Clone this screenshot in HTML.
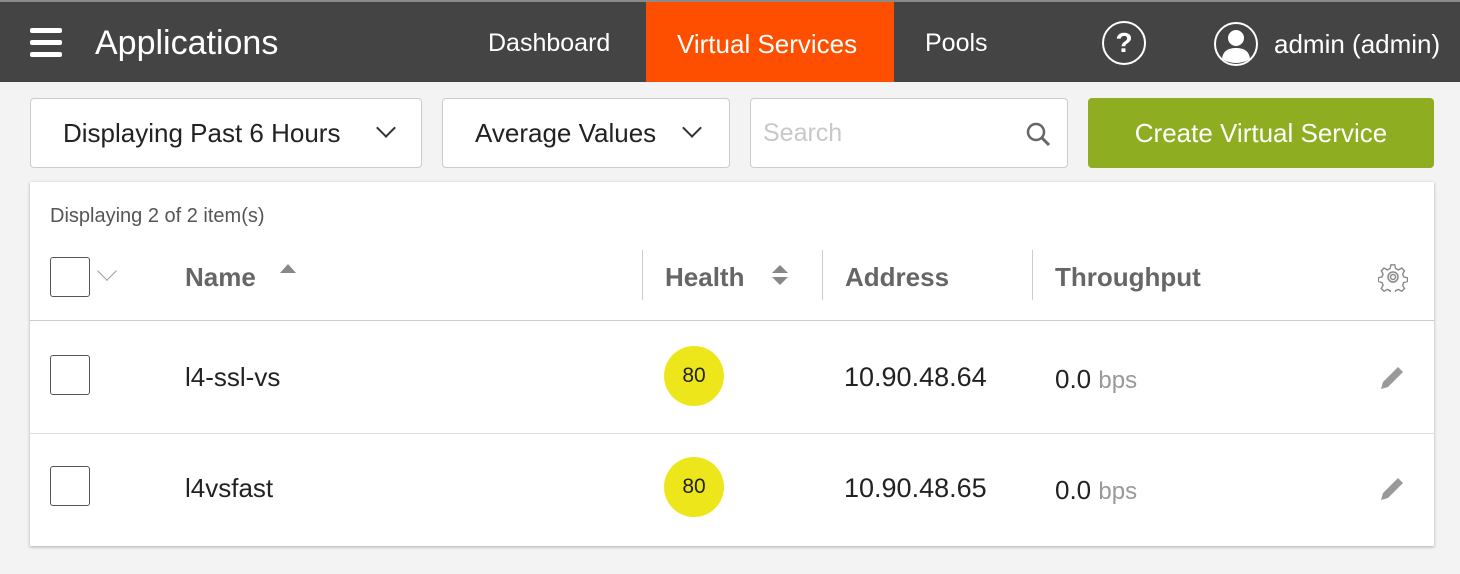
<!DOCTYPE html>
<html><head><style>
*{margin:0;padding:0;box-sizing:border-box}
body{width:1460px;height:574px;background:#f3f3f3;font-family:"Liberation Sans",sans-serif;position:relative;overflow:hidden;color:#222}
.top{position:absolute;left:0;top:0;width:1460px;height:82px;background:#444;border-top:2px solid #8a8a8a}
.a{position:absolute;white-space:nowrap}
.nav{color:#fff;font-size:25px;top:27px}
.box{position:absolute;background:#fff;border:1px solid #ccc;border-radius:4px;height:70px;top:98px}
.chev{position:absolute;width:14px;height:14px;border-right:2px solid #333;border-bottom:2px solid #333;transform:rotate(45deg)}
.card{position:absolute;left:30px;top:182px;width:1404px;height:364px;background:#fff;box-shadow:0 1px 3px rgba(0,0,0,.3)}
.hd{font-weight:bold;color:#666;font-size:26px;top:80px}
.cb{position:absolute;width:40px;height:40px;border:1.5px solid #555;border-radius:3px;background:#fff}
.sep{position:absolute;width:1px;height:50px;background:#ccc;top:68px}
.hl{position:absolute;left:0;width:1404px;height:1px;background:#ddd}
.badge{position:absolute;width:60px;height:60px;border-radius:50%;background:#ede61a;font-size:21px;text-align:center;line-height:60px;color:#222}
.cell{font-size:26px;color:#222}
</style></head><body>
<div class="top">
 <div class="a" style="left:30px;top:26px;width:32px;height:5px;background:#fff;border-radius:2px"></div>
 <div class="a" style="left:30px;top:38px;width:32px;height:5px;background:#fff;border-radius:2px"></div>
 <div class="a" style="left:30px;top:50px;width:32px;height:5px;background:#fff;border-radius:2px"></div>
 <div class="a" style="left:95px;top:22px;color:#fff;font-size:34px">Applications</div>
 <div class="a nav" style="left:488px">Dashboard</div>
 <div class="a" style="left:646px;top:0;width:248px;height:80px;background:#fe4f00"></div>
 <div class="a nav" style="left:677px;font-size:26px">Virtual Services</div>
 <div class="a nav" style="left:925px">Pools</div>
 <div class="a" style="left:1102px;top:19px;width:44px;height:44px;border:2px solid #fff;border-radius:50%;color:#fff;font-size:28px;font-weight:bold;text-align:center;line-height:40px">?</div>
 <svg class="a" style="left:1213px;top:19px" width="46" height="46" viewBox="0 0 46 46"><circle cx="23" cy="23" r="21" fill="none" stroke="#fff" stroke-width="2"/><circle cx="23" cy="17" r="8" fill="#fff"/><path d="M9 38 Q10 27 23 27 Q36 27 37 38 Q23 46 9 38Z" fill="#fff"/></svg>
 <div class="a nav" style="left:1274px;font-size:26px">admin (admin)</div>
</div>
<div class="box" style="left:30px;width:392px"><div class="a" style="left:32px;top:19px;font-size:26px">Displaying Past 6 Hours</div><div class="chev" style="left:348px;top:22px"></div></div>
<div class="box" style="left:442px;width:288px"><div class="a" style="left:32px;top:19px;font-size:26px">Average Values</div><div class="chev" style="left:242px;top:22px"></div></div>
<div class="box" style="left:750px;width:318px"><div class="a" style="left:12px;top:20px;font-size:25px;color:#c8c8c8">Search</div>
 <svg class="a" style="left:274px;top:22px" width="26" height="26" viewBox="0 0 26 26"><circle cx="11" cy="11" r="8" fill="none" stroke="#666" stroke-width="2.5"/><path d="M17 17 L24 24" stroke="#666" stroke-width="3"/></svg></div>
<div class="a" style="left:1088px;top:98px;width:346px;height:70px;background:#8fad21;border-radius:4px;color:#fff;font-size:26px;text-align:center;line-height:70px">Create Virtual Service</div>
<div class="card">
 <div class="a" style="left:20px;top:23px;font-size:20px;color:#555">Displaying 2 of 2 item(s)</div>
 <div class="cb" style="left:20px;top:75px"></div>
 <div class="a" style="left:70px;top:82px;width:14px;height:14px;border-right:1.5px solid #999;border-bottom:1.5px solid #999;transform:rotate(45deg)"></div>
 <div class="a hd" style="left:155px">Name</div>
 <div class="a" style="left:250px;top:82px;border-left:8px solid transparent;border-right:8px solid transparent;border-bottom:9px solid #888"></div>
 <div class="sep" style="left:612px"></div>
 <div class="a hd" style="left:635px">Health</div>
 <div class="a" style="left:742px;top:83px;border-left:8px solid transparent;border-right:8px solid transparent;border-bottom:8px solid #888"></div>
 <div class="a" style="left:742px;top:95px;border-left:8px solid transparent;border-right:8px solid transparent;border-top:8px solid #888"></div>
 <div class="sep" style="left:792px"></div>
 <div class="a hd" style="left:815px">Address</div>
 <div class="sep" style="left:1002px"></div>
 <div class="a hd" style="left:1025px">Throughput</div>
 <svg class="a" style="left:1348px;top:80px" width="30" height="30" viewBox="0 0 30 30"><g fill="none" stroke="#888" stroke-width="1.5"><path d="M13 2h4l1 4 3 1.5 3.5-2 3 3-2 3.5 1.2 3 4 1v4l-4 1-1.2 3 2 3.5-3 3-3.5-2-3 1.2-1 4h-4l-1-4-3-1.2-3.5 2-3-3 2-3.5-1.2-3-4-1v-4l4-1 1.2-3-2-3.5 3-3 3.5 2 3-1.5z" transform="scale(.93) translate(1 1)"/><circle cx="15" cy="15" r="5"/><circle cx="15" cy="15" r="2.5"/></g></svg>
 <div class="hl" style="top:138px;background:#ccc"></div>
 <div class="cb" style="left:20px;top:173px"></div>
 <div class="a cell" style="left:155px;top:180px">l4-ssl-vs</div>
 <div class="badge" style="left:634px;top:164px">80</div>
 <div class="a cell" style="left:814px;top:180px;font-size:27px">10.90.48.64</div>
 <div class="a cell" style="left:1025px;top:182px">0.0 <span style="color:#999;font-size:24px">bps</span></div>
 <svg class="a" style="left:1349px;top:181px" width="28" height="28" viewBox="0 0 28 28"><path d="M2 26 L4 19 L19 4 L24 9 L9 24Z" fill="#999"/></svg>
 <div class="hl" style="top:251px"></div>
 <div class="cb" style="left:20px;top:284px"></div>
 <div class="a cell" style="left:155px;top:291px">l4vsfast</div>
 <div class="badge" style="left:634px;top:275px">80</div>
 <div class="a cell" style="left:814px;top:291px;font-size:27px">10.90.48.65</div>
 <div class="a cell" style="left:1025px;top:293px">0.0 <span style="color:#999;font-size:24px">bps</span></div>
 <svg class="a" style="left:1349px;top:292px" width="28" height="28" viewBox="0 0 28 28"><path d="M2 26 L4 19 L19 4 L24 9 L9 24Z" fill="#999"/></svg>
</div>
</body></html>
